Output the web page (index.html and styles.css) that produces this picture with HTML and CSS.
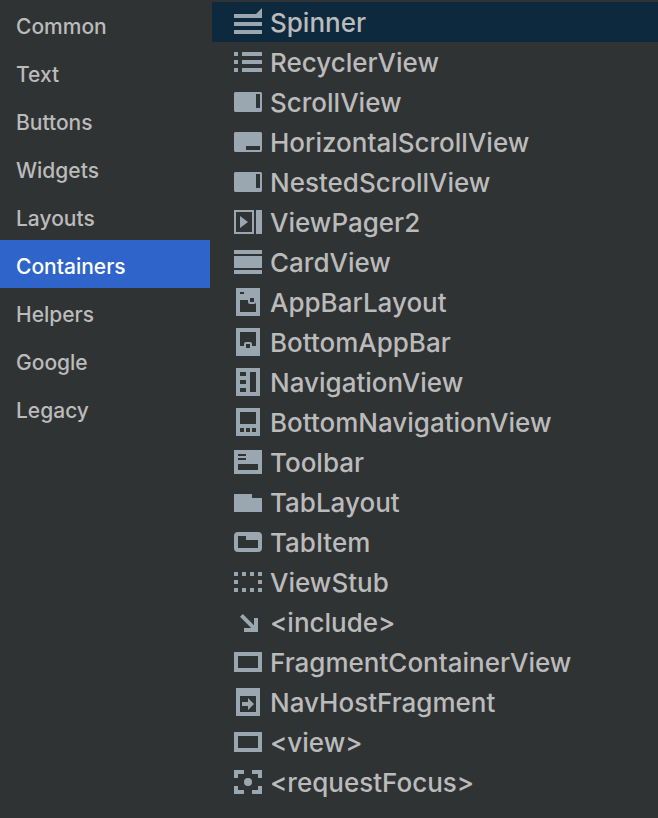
FILE: index.html
```
<!DOCTYPE html>
<html lang="en">
<head>
  <meta charset="UTF-8">
  <meta name="viewport" content="width=device-width, initial-scale=1.0">
  <title>Palette</title>
  <link rel="stylesheet" href="styles.css">
</head>
<body>
  <div class="palette">
    <!-- Categories -->
    <nav class="categories" aria-label="Categories">
      <button type="button" class="category">Common</button>
      <button type="button" class="category">Text</button>
      <button type="button" class="category">Buttons</button>
      <button type="button" class="category">Widgets</button>
      <button type="button" class="category">Layouts</button>
      <button type="button" class="category active">Containers</button>
      <button type="button" class="category">Helpers</button>
      <button type="button" class="category">Google</button>
      <button type="button" class="category">Legacy</button>
    </nav>

    <!-- Components -->
    <main class="components">
      <button type="button" class="component selected">
        <svg class="icon" viewBox="0 0 16 16"><path d="M12 4l3-3v5H1V4zM1 8h14v2H1zM1 12h14v2H1z"/></svg>
        <span class="name">Spinner</span>
      </button>
      <button type="button" class="component">
        <svg class="icon" viewBox="0 0 16 16"><path d="M1 3h2v2H1zM5 3h10v2H5zM1 7h2v2H1zM5 7h10v2H5zM1 11h2v2H1zM5 11h10v2H5z"/></svg>
        <span class="name">RecyclerView</span>
      </button>
      <button type="button" class="component">
        <svg class="icon" viewBox="0 0 16 16"><path d="M1.5 3h13l.5.5v9l-.5.5h-13l-.5-.5v-9zM12 4v7h2V4z"/></svg>
        <span class="name">ScrollView</span>
      </button>
      <button type="button" class="component">
        <svg class="icon" viewBox="0 0 16 16"><path d="M1.5 3h13l.5.5v9l-.5.5h-13l-.5-.5v-9zM7 10v2h7v-2z"/></svg>
        <span class="name">HorizontalScrollView</span>
      </button>
      <button type="button" class="component">
        <svg class="icon" viewBox="0 0 16 16"><path d="M1.5 3h13l.5.5v9l-.5.5h-13l-.5-.5v-9zM12 4v7h2V4z"/></svg>
        <span class="name">NestedScrollView</span>
      </button>
      <button type="button" class="component">
        <svg class="icon" viewBox="0 0 16 16"><path d="M1 2h10v12H1zM2 3v10h8V3zM12 2h3v12h-3zM4 5l4 3-4 3z"/></svg>
        <span class="name">ViewPager2</span>
      </button>
      <button type="button" class="component">
        <svg class="icon" viewBox="0 0 16 16"><path d="M1 2h14v2H1zM1 5h14v6H1zM1 12h14v2H1z"/></svg>
        <span class="name">CardView</span>
      </button>
      <button type="button" class="component">
        <svg class="icon" viewBox="0 0 16 16"><path d="M2 1h12v14H2zM4 3v1h2V3zM9 6v2h2V6zM4 7v6h8V8q0 1-1 1H9q-1 0-1-1V7z"/></svg>
        <span class="name">AppBarLayout</span>
      </button>
      <button type="button" class="component">
        <svg class="icon" viewBox="0 0 16 16"><path d="M2 1h12v14H2zM4 3v7h2V9q0-1 1-1h2q1 0 1 1v1h2V3zM7 9v2h2V9z"/></svg>
        <span class="name">BottomAppBar</span>
      </button>
      <button type="button" class="component">
        <svg class="icon" viewBox="0 0 16 16"><path d="M2 1h12v14H2zM4 3v2h3V3zM4 7v2h3V7zM4 11v2h3v-2zM9 3v10h3V3z"/></svg>
        <span class="name">NavigationView</span>
      </button>
      <button type="button" class="component">
        <svg class="icon" viewBox="0 0 16 16"><path d="M2 1h12v14H2zM4 3v6h8V3zM4 11v2h2v-2zM7 11v2h2v-2zM10 11v2h2v-2z"/></svg>
        <span class="name">BottomNavigationView</span>
      </button>
      <button type="button" class="component">
        <svg class="icon" viewBox="0 0 16 16"><path d="M1 2h14v12H1zM3 4v1h4V4zM3 6v1h4V6zM3 9v3h10V9z"/></svg>
        <span class="name">Toolbar</span>
      </button>
      <button type="button" class="component">
        <svg class="icon" viewBox="0 0 16 16"><path d="M1 4h9v2h5v7H1z"/></svg>
        <span class="name">TabLayout</span>
      </button>
      <button type="button" class="component">
        <svg class="icon" viewBox="0 0 16 16"><path d="M3 3h10q2 0 2 2v6q0 2-2 2H3q-2 0-2-2V5q0-2 2-2zM3 5v6h10V7H7V5z"/></svg>
        <span class="name">TabItem</span>
      </button>
      <button type="button" class="component">
        <svg class="icon" viewBox="0 0 16 16"><path d="M1 3h2v2H1zM5 3h2v2H5zM9 3h2v2H9zM13 3h2v2h-2zM1 7h2v2H1zM13 7h2v2h-2zM1 11h2v2H1zM5 11h2v2H5zM9 11h2v2H9zM13 11h2v2h-2z"/></svg>
        <span class="name">ViewStub</span>
      </button>
      <button type="button" class="component">
        <svg class="icon" viewBox="0 0 16 16"><path d="M5.4 4L11 9.6V6h2v7H6v-2h3.6L4 5.4z"/></svg>
        <span class="name">&lt;include&gt;</span>
      </button>
      <button type="button" class="component">
        <svg class="icon" viewBox="0 0 16 16"><path d="M1 3h14v10H1zM3 5v6h10V5z"/></svg>
        <span class="name">FragmentContainerView</span>
      </button>
      <button type="button" class="component">
        <svg class="icon" viewBox="0 0 16 16"><path d="M2 1h12v14H2zM4 5v8h8V5zM5 8h3V6l3 3-3 3v-2H5z"/></svg>
        <span class="name">NavHostFragment</span>
      </button>
      <button type="button" class="component">
        <svg class="icon" viewBox="0 0 16 16"><path d="M1 3h14v10H1zM3 5v6h10V5z"/></svg>
        <span class="name">&lt;view&gt;</span>
      </button>
      <button type="button" class="component">
        <svg class="icon" viewBox="0 0 16 16"><path d="M1 2h5v2H3v2H1zM10 2h5v4h-2V4h-3zM1 10h2v2h3v2H1zM13 10h2v4h-5v-2h3z"/><circle cx="8" cy="8" r="2"/></svg>
        <span class="name">&lt;requestFocus&gt;</span>
      </button>
    </main>
  </div>
</body>
</html>
```

FILE: styles.css
```
/* Reset */
* {
  box-sizing: border-box;
}

body {
  margin: 0;
  background-color: #303334;
  color: #bbbbbb;
  font-family: Inter, "Liberation Sans", sans-serif;
  font-weight: 500;
}

button {
  display: block;
  width: 100%;
  margin: 0;
  border: none;
  background: none;
  color: inherit;
  font-family: inherit;
  font-weight: inherit;
  text-align: left;
  white-space: nowrap;
}

.palette {
  display: flex;
  min-height: 100vh;
}

/* Categories */
.categories {
  flex: 0 0 212px;
  border-right: 2px solid #313333;
}

.category {
  height: 48px;
  padding: 6px 16px 0;
  font-size: 21px;
  line-height: 42px;
}

.category.active {
  background-color: #2f65ca;
  color: #ffffff;
}

/* Components */
.components {
  flex: 1;
  min-width: 0;
  padding-top: 2px;
}

.component {
  display: flex;
  align-items: center;
  gap: 6px;
  height: 40px;
  padding: 0 20px;
  font-size: 26px;
}

.component.selected {
  background-color: #0d293e;
}

.name {
  padding-top: 2px;
  line-height: 38px;
}

.icon {
  flex: none;
  width: 32px;
  height: 32px;
  fill: #9aa7b0;
  fill-rule: evenodd;
}
```
